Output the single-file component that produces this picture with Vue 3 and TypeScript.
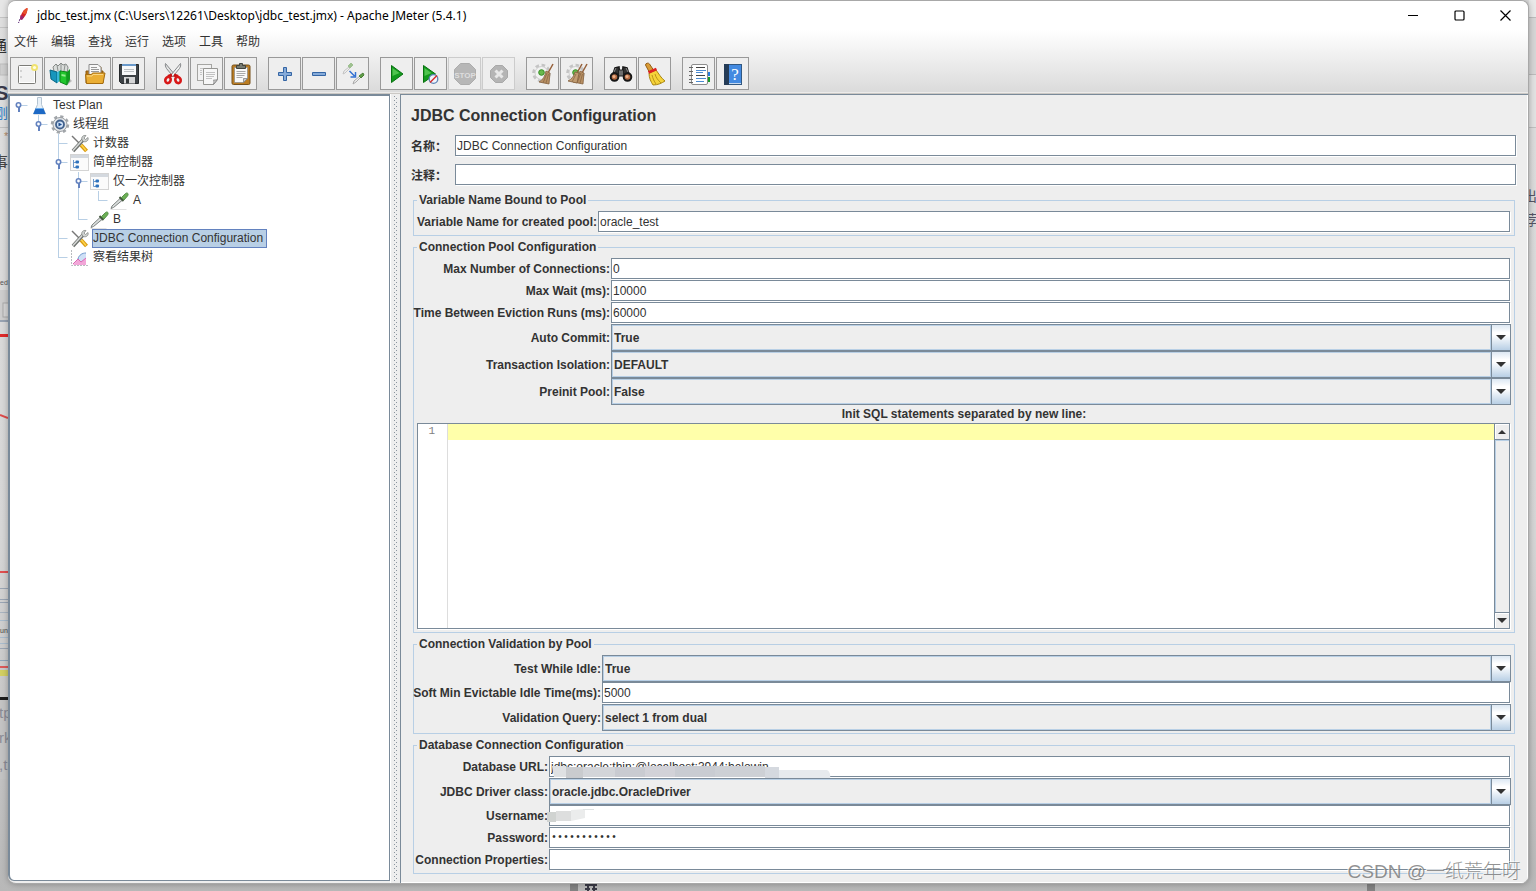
<script setup lang="ts">
import { ref } from 'vue'

type Guide = 'blank' | 'line' | 'tee' | 'elbow' | 'root' | 'handle-last' | 'handle-mid'

interface TreeRow {
  guides: Guide[]
  icon: string
  label: string
  selected?: boolean
}

interface Field {
  id: string
  label: string
  kind: 'text' | 'combo' | 'password'
  value: string
  mask?: 'url' | 'user'
}

interface Tool {
  icon: string
  title: string
  disabled?: boolean
}

const menus = ['文件', '编辑', '查找', '运行', '选项', '工具', '帮助']

const toolGroups: Tool[][] = [
  [
    { icon: 'new', title: '新建' },
    { icon: 'templates', title: '模板' },
    { icon: 'open', title: '打开' },
    { icon: 'save', title: '保存' },
  ],
  [
    { icon: 'cut', title: '剪切' },
    { icon: 'copy', title: '复制' },
    { icon: 'paste', title: '粘贴' },
  ],
  [
    { icon: 'plus', title: '展开全部' },
    { icon: 'minus', title: '收起全部' },
    { icon: 'toggle', title: '切换' },
  ],
  [
    { icon: 'start', title: '启动' },
    { icon: 'start-nt', title: '无间隔启动' },
    { icon: 'stop', title: '停止', disabled: true },
    { icon: 'shutdown', title: '关闭', disabled: true },
  ],
  [
    { icon: 'clear', title: '清除' },
    { icon: 'clear-all', title: '清除全部' },
  ],
  [
    { icon: 'search', title: '查找' },
    { icon: 'reset', title: '重置搜索' },
  ],
  [
    { icon: 'functions', title: '函数助手' },
    { icon: 'help', title: '帮助' },
  ],
]

const rows: TreeRow[] = [
  { guides: ['root'], icon: 'flask', label: 'Test Plan' },
  { guides: ['blank', 'handle-last'], icon: 'gear', label: '线程组' },
  { guides: ['blank', 'blank', 'tee'], icon: 'wrench', label: '计数器' },
  { guides: ['blank', 'blank', 'handle-mid'], icon: 'controller', label: '简单控制器' },
  { guides: ['blank', 'blank', 'line', 'handle-mid'], icon: 'controller', label: '仅一次控制器' },
  { guides: ['blank', 'blank', 'line', 'line', 'elbow'], icon: 'pipette', label: 'A' },
  { guides: ['blank', 'blank', 'line', 'elbow'], icon: 'pipette', label: 'B' },
  { guides: ['blank', 'blank', 'tee'], icon: 'wrench', label: 'JDBC Connection Configuration', selected: true },
  { guides: ['blank', 'blank', 'elbow'], icon: 'chart', label: '察看结果树' },
]

const name = ref('JDBC Connection Configuration')
const comment = ref('')
const sql = ref('')

const poolName = ref<Field[]>([
  { id: 'pool-name', label: 'Variable Name for created pool:', kind: 'text', value: 'oracle_test' },
])
const pool = ref<Field[]>([
  { id: 'max-conn', label: 'Max Number of Connections:', kind: 'text', value: '0' },
  { id: 'max-wait', label: 'Max Wait (ms):', kind: 'text', value: '10000' },
  { id: 'eviction', label: 'Time Between Eviction Runs (ms):', kind: 'text', value: '60000' },
  { id: 'commit', label: 'Auto Commit:', kind: 'combo', value: 'True' },
  { id: 'isolation', label: 'Transaction Isolation:', kind: 'combo', value: 'DEFAULT' },
  { id: 'preinit', label: 'Preinit Pool:', kind: 'combo', value: 'False' },
])
const validation = ref<Field[]>([
  { id: 'idle', label: 'Test While Idle:', kind: 'combo', value: 'True' },
  { id: 'soft-min', label: 'Soft Min Evictable Idle Time(ms):', kind: 'text', value: '5000' },
  { id: 'query', label: 'Validation Query:', kind: 'combo', value: 'select 1 from dual' },
])
const database = ref<Field[]>([
  { id: 'url', label: 'Database URL:', kind: 'text', value: 'jdbc:oracle:thin:@localhost:3944:helowin', mask: 'url' },
  { id: 'driver', label: 'JDBC Driver class:', kind: 'combo', value: 'oracle.jdbc.OracleDriver' },
  { id: 'user', label: 'Username:', kind: 'text', value: '', mask: 'user' },
  { id: 'password', label: 'Password:', kind: 'password', value: 'secret12345' },
  { id: 'props', label: 'Connection Properties:', kind: 'text', value: '' },
])

const groups = [
  { key: 'name', title: 'Variable Name Bound to Pool', fields: poolName, editor: false },
  { key: 'pool', title: 'Connection Pool Configuration', fields: pool, editor: true },
  { key: 'validation', title: 'Connection Validation by Pool', fields: validation, editor: false },
  { key: 'database', title: 'Database Connection Configuration', fields: database, editor: false },
]
</script>

<template>
  <div class="desktop">
    <svg class="strip strip-left" width="8" height="891" viewBox="0 0 8 891" aria-hidden="true">
      <rect width="8" height="17" fill="#e6e6e6" />
      <rect y="17" width="8" height="1" fill="#c4c4c4" />
      <rect y="18" width="8" height="9" fill="#dedede" />
      <rect y="27" width="8" height="1" fill="#c4c4c4" />
      <rect y="64" width="8" height="11" fill="#cfcfcf" stroke="#bdbdbd" />
      <text x="-9" y="52" font-size="16" fill="#333">通</text>
      <text x="-5" y="100" font-size="20" font-weight="bold" fill="#3a3a4a">S</text>
      <text x="-6" y="118" font-size="14" fill="#2f7fc9">刚</text>
      <rect y="127" width="8" height="1" fill="#bfbfbf" />
      <text x="4" y="140" font-size="11" fill="#b08a6a">*</text>
      <text x="-8" y="168" font-size="16" fill="#444">事</text>
      <text x="0" y="285" font-size="7" fill="#555">ed</text>
      <rect y="290" width="8" height="30" fill="#cdcdcd" />
      <rect x="3" y="303" width="8" height="14" fill="#d6d6d6" stroke="#aaa" />
      <rect y="320" width="8" height="2" fill="#98a3b2" />
      <rect y="334" width="8" height="3" fill="#e02a2a" />
      <path d="M0 415l8 3" stroke="#dd4a4a" stroke-width="2" />
      <rect y="571" width="8" height="2" fill="#e05050" />
      <rect y="588" width="8" height="1" fill="#9aa5b4" />
      <rect y="599" width="8" height="1" fill="#9aa5b4" />
      <rect y="602" width="8" height="1" fill="#9aa5b4" />
      <rect y="612" width="8" height="1" fill="#a9b4c0" />
      <rect y="620" width="8" height="1" fill="#a9bccd" />
      <text x="0" y="633" font-size="7" fill="#444">un</text>
      <rect y="637" width="8" height="1" fill="#a9bccd" />
      <rect y="643" width="8" height="1" fill="#a9bccd" />
      <rect y="648" width="8" height="1" fill="#9aa5b4" />
      <rect y="660" width="8" height="1" fill="#8fa6bb" />
      <rect y="666" width="8" height="2" fill="#dc5a5a" />
      <rect y="670" width="8" height="6" fill="#d2cf63" />
      <rect y="697" width="8" height="3" fill="#1c1c1c" />
      <rect y="700" width="8" height="79" fill="#c3c3c3" />
      <text x="-1" y="718" font-size="15" fill="#8b8b95">tp</text>
      <text x="-1" y="743" font-size="15" fill="#8b8b95">rk</text>
      <text x="-1" y="770" font-size="15" fill="#8b8b95">,t</text>
    </svg>
    <svg class="strip strip-right" width="7" height="891" viewBox="0 0 7 891" aria-hidden="true">
      <rect width="7" height="17" fill="#e9e9e9" />
      <rect y="17" width="7" height="57" fill="#d6d6d6" />
      <rect y="17" width="7" height="1" fill="#bcbcbc" />
      <rect y="74" width="7" height="1" fill="#bcbcbc" />
      <rect y="75" width="7" height="52" fill="#e2e2e2" />
      <rect y="127" width="7" height="1" fill="#c0c0c0" />
      <text x="-6" y="201" font-size="14" fill="#555566">出</text>
      <text x="-6" y="225" font-size="14" fill="#555566">荐</text>
    </svg>
    <svg class="strip strip-bottom" width="1536" height="7" viewBox="0 0 1536 7" aria-hidden="true">
      <rect x="570" width="8" height="7" fill="#828282" />
      <path d="M585 1h12M588 2v5M594 2v5M585 5h5M592 5h5" stroke="#3a3a46" stroke-width="2" />
      <rect x="1367" width="8" height="7" fill="#828282" />
    </svg>

    <div class="window">
      <header class="titlebar">
        <svg class="feather" width="12" height="18" viewBox="0 0 12 18" aria-hidden="true">
          <path d="M10.5 1C7 2 4 6 3 12l2 .5C8 10 10.500 6 10.500 1z" fill="#d22128" />
          <path d="M10.500 1C9 1 7 3 5.500 6l3 1.500C10 5 10.800 3 10.500 1z" fill="#e8532a" />
          <path d="M3.500 8l3.500 2-2 3-2-.8z" fill="#9b2672" />
          <path d="M3 12L1.500 16" stroke="#5d2a78" stroke-width="1" stroke-dasharray="2 1" />
        </svg>
        <h1 class="title">jdbc_test.jmx (C:\Users\12261\Desktop\jdbc_test.jmx) - Apache JMeter (5.4.1)</h1>
        <button class="winctl" type="button" aria-label="Minimize">
          <svg width="11" height="11" viewBox="0 0 11 11"><path d="M0 5.500h10" stroke="#000" /></svg>
        </button>
        <button class="winctl" type="button" aria-label="Maximize">
          <svg width="11" height="11" viewBox="0 0 11 11"><rect x="1" y="1" width="9" height="9" rx="1" fill="none" stroke="#000" stroke-width="1.200" /></svg>
        </button>
        <button class="winctl" type="button" aria-label="Close">
          <svg width="11" height="11" viewBox="0 0 11 11"><path d="M.5.5l10 10M10.500.5l-10 10" stroke="#000" stroke-width="1.200" /></svg>
        </button>
      </header>

      <div class="bars">
        <nav class="menubar">
          <button v-for="m in menus" :key="m" class="menu" type="button">{{ m }}</button>
        </nav>
        <div class="toolbar" role="toolbar">
          <div v-for="(g, gi) in toolGroups" :key="gi" class="toolgroup">
            <button v-for="t in g" :key="t.icon" class="tool" type="button" :aria-label="t.title" :disabled="t.disabled">
              <svg width="24" height="24" viewBox="0 0 24 24" aria-hidden="true">
                <g v-if="t.icon === 'new'">
                  <rect x="3.500" y="3.500" width="17" height="18" rx="1" fill="#f1f1f1" stroke="#7c7c78" />
                  <rect x="4.500" y="4.500" width="15" height="16" fill="none" stroke="#fff" />
                  <circle cx="6" cy="9" r=".8" fill="#aaa" /><circle cx="6" cy="15" r=".8" fill="#aaa" />
                  <circle cx="19.500" cy="5.500" r="3.500" fill="#f0e270" /><circle cx="19.500" cy="5.500" r="1.600" fill="#fffce0" />
                </g>
                <g v-else-if="t.icon === 'templates'">
                  <path d="M4 5l3-3 2 2 3-3 2 2 3-1 2 3-1 8H6z" fill="#d9dcda" stroke="#858a87" />
                  <path d="M8 3l1 6M12 2v7M16 3l-1 6" stroke="#8c918e" />
                  <path d="M1 8l7 2v11l-6-4z" fill="#1796bd" stroke="#086584" />
                  <path d="M8 10l4-2v10l-4 3z" fill="#37b6d8" />
                  <path d="M11 9l7 1v13l-7-3z" fill="#20c62d" stroke="#0b8417" />
                  <path d="M18 10l3-3v12l-3 4z" fill="#109b20" /><path d="M12.500 12l4 .7v2l-4-.8z" fill="#93ed8e" />
                  <path d="M18 23l5-4-2-2z" fill="#999" opacity=".6" />
                </g>
                <g v-else-if="t.icon === 'open'">
                  <path d="M3 9h4V5h11v4h2v12H3z" fill="#b87512" stroke="#8c5a0f" />
                  <path d="M6 2.500h9l3 3V13H6z" fill="#f8f8f8" stroke="#8b8b8b" /><path d="M8 5.500h6M8 7.500h8M8 9.500h8" stroke="#999" />
                  <path d="M2.500 12.500h6l1-1.500h12.500l-2 10.500H3.500z" fill="#eaae35" stroke="#a56c10" />
                  <path d="M4 14h5l1-1.500h10" fill="none" stroke="#f9d685" />
                </g>
                <g v-else-if="t.icon === 'save'">
                  <path d="M2.500 2.500h19v19H4.500l-2-2z" fill="#3c4145" stroke="#25292c" />
                  <rect x="5" y="2" width="14" height="11" fill="#f7f8f9" /><rect x="5" y="2" width="14" height="2" fill="#6a9acb" />
                  <path d="M7 7.500h10M7 9.500h10" stroke="#bcc0c3" />
                  <rect x="7" y="15" width="11" height="6.500" fill="#d5d6d7" /><rect x="9" y="16.500" width="3" height="5" fill="#33383b" />
                </g>
                <g v-else-if="t.icon === 'cut'">
                  <path d="M4.500 1.500c-.5 2 0 3 1 5l7 8.500 1.500-2z" fill="#e3e4e4" stroke="#85888a" />
                  <path d="M19.500 1.500c.5 2 0 3-1 5l-7 8.500-1.500-2z" fill="#f1f1f1" stroke="#85888a" />
                  <path d="M11 13l-4 1.500M13 13l4 1.500" stroke="#c71414" stroke-width="3" />
                  <ellipse cx="7" cy="18" rx="2.600" ry="3.200" fill="none" stroke="#d81818" stroke-width="2.600" transform="rotate(25 7 18)" />
                  <ellipse cx="17" cy="18" rx="2.600" ry="3.200" fill="none" stroke="#d81818" stroke-width="2.600" transform="rotate(-25 17 18)" />
                </g>
                <g v-else-if="t.icon === 'copy'">
                  <rect x="2.500" y="2.500" width="14" height="16" fill="#f2f2f2" stroke="#a5a5a2" />
                  <path d="M5 6.500h4M5 8.500h2M5 10.500h2M5 12.500h2" stroke="#c5c5c5" />
                  <path d="M8.500 6.500h14v11l-4 5h-10z" fill="#f7f7f7" stroke="#969693" />
                  <path d="M11 10.500h9M11 12.500h9M11 14.500h8M11 16.500h6" stroke="#c2c2c2" />
                  <path d="M22.500 17.500c-2 1-4 .5-4 .5s1 2 0 4.500z" fill="#ddd" stroke="#8c8c8c" />
                </g>
                <g v-else-if="t.icon === 'paste'">
                  <rect x="3" y="3" width="18" height="19.500" rx="1.500" fill="#bb7d23" stroke="#76501a" />
                  <path d="M5.500 5.500h13v11l-4 4h-9z" fill="#fafafa" stroke="#8d8d88" stroke-width=".7" />
                  <path d="M7.500 9.500h9M7.500 11.500h9M7.500 13.500h8M7.500 15.500h6" stroke="#aaa" />
                  <path d="M18.500 16.500l-4 4v-4z" fill="#ccc" stroke="#777" stroke-width=".7" />
                  <path d="M7.500 6.500v-3h3v-2h3v2h3v3z" fill="#777b72" stroke="#40443f" />
                </g>
                <path v-else-if="t.icon === 'plus'" d="M10.500 5.500h3v5h5v3h-5v5h-3v-5h-5v-3h5z" fill="#86abd9" stroke="#3465a4" stroke-linejoin="round" />
                <path v-else-if="t.icon === 'minus'" d="M5.500 10.500h13v3h-13z" fill="#86abd9" stroke="#3465a4" stroke-linejoin="round" />
                <g v-else-if="t.icon === 'toggle'">
                  <g opacity=".55"><path d="M2 12l1-3 5-4 1 1-5 5z" fill="#eee" stroke="#a3a3a3" /><path d="M7 4l3-3 2 2-3 3z" fill="#5f9d46" stroke="#5f9d46" /></g>
                  <path d="M8.500 9l5 5M14.500 10v5h-5" fill="none" stroke="#3471d2" stroke-width="1.500" />
                  <path d="M12 22l1-3 6-5 1 1-5 5z" fill="#f0f0f0" stroke="#aaa" /><path d="M18 14l4-3 1 2-3 3z" fill="#5f9d46" stroke="#4b8038" />
                </g>
                <g v-else-if="t.icon === 'start'"><path d="M6.500 3.500l11.500 8.500-11.500 8.500z" fill="#12991d" stroke="#087210" /><path d="M7.500 6l7 5-7 3z" fill="#4fc34e" /></g>
                <g v-else-if="t.icon === 'start-nt'">
                  <path d="M4.500 3.500l12 8.500-12 8.500z" fill="#12991d" stroke="#087210" /><path d="M5.500 6l7 5-7 3z" fill="#4fc34e" />
                  <circle cx="14.500" cy="17" r="4.300" fill="#eff4fc" stroke="#5e83b5" stroke-width="1.300" /><path d="M11 20.500l7-7" stroke="#d62b2b" stroke-width="1.500" />
                </g>
                <g v-else-if="t.icon === 'stop'">
                  <path d="M7.500 1.500h9l6 6v9l-6 6h-9l-6-6v-9z" fill="#b7b7b7" stroke="#acacac" />
                  <text x="12" y="15.500" text-anchor="middle" class="stop-word">STOP</text>
                </g>
                <g v-else-if="t.icon === 'shutdown'">
                  <path d="M8.500 3.500h7l5 5v7l-5 5h-7l-5-5v-7z" fill="#b5b5b5" stroke="#a9a9a9" />
                  <path d="M8.500 8.500l7 7M15.500 8.500l-7 7" stroke="#e8e8e8" stroke-width="3" />
                </g>
                <g v-else-if="t.icon === 'clear' || t.icon === 'clear-all'">
                  <circle cx="10.500" cy="11" r="7.800" fill="#f2f2f2" stroke="#c4c4c4" stroke-width="3" stroke-dasharray="3.500 2.600" />
                  <circle cx="10.500" cy="11" r="6.500" fill="#f2f2f2" stroke="#cfcfcf" /><circle cx="10.500" cy="10.500" r="2.800" fill="#69b94d" stroke="#348e24" />
                  <path d="M22 2l-5 9" stroke="#955f38" stroke-width="1.500" />
                  <path d="M15 9l4 2-1 11-10-2c4-2 6-6 7-11z" fill="#b89064" stroke="#83603e" stroke-width=".8" /><path d="M16 11l-4 10M17.500 12L15 21" stroke="#8a6845" stroke-width=".8" />
                  <g v-if="t.icon === 'clear-all'"><path d="M17 2l-5 9" stroke="#955f38" stroke-width="1.500" /><path d="M10 10l4 1-2 10-9-2c4-2 6-5 7-9z" fill="#c09c72" stroke="#83603e" stroke-width=".8" /><path d="M11 12l-4 8" stroke="#8a6845" stroke-width=".8" /></g>
                </g>
                <g v-else-if="t.icon === 'search'">
                  <path d="M3 15l3-9 4-1 1 9M21 15l-3-9-4-1-1 9" fill="#333" stroke="#191919" stroke-width="1.500" />
                  <rect x="9.500" y="8" width="5" height="6" fill="#6e6e6e" stroke="#222" />
                  <path d="M5 10l2-4M19 10l-2-4" stroke="#8d8d8d" />
                  <circle cx="5.500" cy="15" r="3.800" fill="#b26a42" stroke="#171717" stroke-width="2" /><circle cx="18.500" cy="15" r="3.800" fill="#b26a42" stroke="#171717" stroke-width="2" />
                  <circle cx="5" cy="14.500" r="1.500" fill="#ebb089" /><circle cx="18" cy="14.500" r="1.500" fill="#ebb089" />
                </g>
                <g v-else-if="t.icon === 'reset'">
                  <path d="M2.500 3c0-2 3-2.500 4-1l4 6-4 2.500z" fill="#d99b35" stroke="#955d14" />
                  <path d="M6 11l7-3c3 4 5 8 9 11-3 2-7 4-12 4-2-3-4-7-4-12z" fill="#f5d33a" stroke="#a88512" />
                  <path d="M9 13c1 4 2 6 4 9M12 12c1 4 3 6 6 9" fill="none" stroke="#bb9419" /><path d="M5.500 10.500l8-3.500" stroke="#d22" stroke-width="3" />
                </g>
                <g v-else-if="t.icon === 'functions'">
                  <rect x="20" y="10" width="3" height="4" fill="#267ce0" /><rect x="20" y="15" width="3" height="5" fill="#149a28" />
                  <rect x="4.500" y="2.500" width="16" height="20" rx="1.500" fill="#fff" stroke="#8d8d8d" />
                  <path d="M9 5.500h9M9 13.500h9" stroke="#444" /><path d="M9 8.500h10M9 10.500h7M9 16.500h10M9 19.500h8" stroke="#4b8bd2" />
                  <path d="M2 5.500h4M2 9.500h4M2 13.500h4M2 17.500h4M2 20.500h4" stroke="#666" />
                </g>
                <g v-else>
                  <rect x="3.500" y="2.500" width="17" height="20" fill="#438ae1" stroke="#315882" /><rect x="3" y="2" width="5" height="21" fill="#253c57" />
                  <path d="M8 21.500h12" stroke="#c7d8ec" /><text x="14" y="17.500" text-anchor="middle" class="help-mark">?</text>
                </g>
              </svg>
            </button>
          </div>
        </div>
      </div>

      <div class="body">
        <ul class="tree" role="tree">
          <li v-for="row in rows" :key="row.label" class="row" role="treeitem" :aria-selected="!!row.selected">
            <svg v-for="(g, i) in row.guides" :key="i" class="guide" width="20" height="19" viewBox="0 0 20 19" aria-hidden="true">
              <path v-if="g === 'line' || g === 'tee' || (g === 'handle-mid' && i === 2)" d="M8.500 0v19" class="guide-line" />
              <path v-if="g === 'elbow' || g === 'handle-last'" d="M8.500 0v10" class="guide-line" />
              <path v-if="g === 'handle-mid' && i === 3" d="M8.500 0v19" class="guide-line" />
              <path v-if="g !== 'blank' && g !== 'line'" d="M8.500 9.500h9" class="guide-line" />
              <g v-if="g === 'root' || g.startsWith('handle')">
                <rect x="8" y="10" width="2" height="6" fill="#6382bf" />
                <circle cx="8.500" cy="9" r="2.200" fill="#fff" stroke="#6382bf" stroke-width="1.600" />
              </g>
            </svg>
            <svg class="node-icon" width="20" height="19" viewBox="0 0 20 19" aria-hidden="true">
              <g v-if="row.icon === 'flask'">
                <path d="M7.500 1.500h4v7l4 9.500h-12l4-9.500z" fill="#e9f1f8" stroke="#b4c4d2" />
                <path d="M5.800 12h7.400l2.500 6H3.200z" fill="#1d69c5" /><path d="M6 12.500h7" stroke="#6eb0ef" />
              </g>
              <g v-else-if="row.icon === 'gear'">
                <circle cx="10" cy="9.500" r="8" fill="none" stroke="#a2a6aa" stroke-width="2.500" stroke-dasharray="3.200 3.080" />
                <circle cx="10" cy="9.500" r="7" fill="#e3e5e7" stroke="#9a9ea3" /><circle cx="10" cy="9.500" r="4" fill="#cfe0f5" stroke="#42618c" stroke-width="1.800" />
                <path d="M8.500 7.500l3.500 2-3.500 2z" fill="#1f4e8e" />
              </g>
              <g v-else-if="row.icon === 'wrench'">
                <path d="M2 2l8 8" stroke="#777" stroke-width="1.500" /><path d="M11 11l5.500 6" stroke="#d89a12" stroke-width="4" /><path d="M11 10.500l5 6" stroke="#ffd54a" stroke-width="1.500" />
                <path d="M3 17l10-11" stroke="#6d716e" stroke-width="3.500" /><path d="M3 16.500L13 5.500" stroke="#d7d9d8" stroke-width="1.500" />
                <path d="M12 6c-1-3 1-5 4-4.500l-2 2.500 1.500 1.500 2.500-2c1 3-2 5-4.500 4z" fill="#cfd2d1" stroke="#858987" stroke-width=".8" />
              </g>
              <g v-else-if="row.icon === 'controller'">
                <rect x=".5" y="1.500" width="18" height="16" fill="#fbfbfb" stroke="#d4d4d4" /><rect x="1" y="2" width="17" height="3" fill="#d4d9df" />
                <path d="M3.500 7v7.500h3M3.500 9.500h3" fill="none" stroke="#6f99c9" /><rect x="5.500" y="7.500" width="3.500" height="3" rx="1" fill="#2e73be" /><rect x="5.500" y="12.500" width="3.500" height="3" rx="1" fill="#2e73be" />
              </g>
              <g v-else-if="row.icon === 'pipette'">
                <path d="M.5 18.500h16" stroke="#e1e1e1" />
                <path d="M1 17.500l1-2.500 8-7.500 2 2-8.500 7z" fill="#d9dddc" stroke="#7d8381" />
                <path d="M9.500 6l4 4" stroke="#455a40" stroke-width="2" /><path d="M11.500 6.500l4-4c2-1.500 3.500.5 2 2.500l-3.500 4z" fill="#6caf55" stroke="#57924a" />
              </g>
              <g v-else>
                <path d="M1.500 2v15.500H18" fill="none" stroke="#b9bcc0" stroke-dasharray="2 1" />
                <path d="M7 12c1-5 5-6 9-7v9H7z" fill="#cfe0f6" /><path d="M8 11c1-4 4-6 8-6" fill="none" stroke="#6e98ce" />
                <path d="M3 17l5-6 3 3 5-4v7z" fill="#f2a6d8" /><path d="M3 16l5-5 3 3 5-4" fill="none" stroke="#d869b4" />
              </g>
            </svg>
            <span class="node-label" :class="{ selected: row.selected }">{{ row.label }}</span>
          </li>
        </ul>

        <div class="splitter" role="separator" aria-orientation="vertical"></div>

        <main class="panel">
          <h2 class="heading">JDBC Connection Configuration</h2>
          <div class="head-row">
            <label class="cjk-label" for="el-name">名称：</label>
            <input id="el-name" v-model="name" class="text" type="text" />
          </div>
          <div class="head-row">
            <label class="cjk-label" for="el-comment">注释：</label>
            <input id="el-comment" v-model="comment" class="text" type="text" />
          </div>

          <fieldset v-for="g in groups" :key="g.key" class="group" :class="'group-' + g.key">
            <legend class="legend">{{ g.title }}</legend>
            <div v-for="f in g.fields.value" :key="f.id" class="field" :class="'field-' + f.kind">
              <label class="label" :for="f.id">{{ f.label }}</label>
              <div class="control">
                <template v-if="f.kind === 'combo'">
                  <select :id="f.id" v-model="f.value" class="select">
                    <option>{{ f.value }}</option>
                  </select>
                  <span class="combo-arrow">
                    <svg width="10" height="5" viewBox="0 0 10 5" aria-hidden="true"><path d="M0 0h10L5 5z" fill="#333" /></svg>
                  </span>
                </template>
                <input v-else :id="f.id" v-model="f.value" class="text" :class="{ secret: f.kind === 'password' }" :type="f.kind" />
                <svg v-if="f.mask === 'url'" class="mask" width="284" height="28" viewBox="0 0 284 28" aria-hidden="true">
                  <path d="M3 10h14v11H5z" fill="#dfe1e3" /><path d="M17 11h17v11H17z" fill="#c9cbce" />
                  <path d="M34 11h32v10H34z" fill="#d3d5d9" /><path d="M66 11h30v10H66z" fill="#c9cbd1" />
                  <path d="M96 10h30v11H96z" fill="#d2d2d8" /><path d="M126 10h40v11h-40z" fill="#c9ccd2" />
                  <path d="M166 10h50v11h-50z" fill="#cdd0d5" /><path d="M216 11h14v11h-14z" fill="#d5d9df" />
                  <path d="M230 14h48q4 2 3 9h-40l-11-1z" fill="#e6eaee" />
                </svg>
                <svg v-if="f.mask === 'user'" class="mask mask-user" width="60" height="22" viewBox="0 0 60 22" aria-hidden="true">
                  <path d="M0 7h9v10H0z" fill="#d0d3d1" /><path d="M9 6h15v10H9z" fill="#dddede" />
                  <path d="M24 5l14-1v9l-14 3z" fill="#ebecec" /><path d="M36 4h11v1H36z" fill="#dfe3e4" />
                </svg>
              </div>
            </div>
            <template v-if="g.editor">
              <label class="editor-label" for="sql">Init SQL statements separated by new line:</label>
              <div class="editor">
                <div class="gutter">1</div>
                <textarea id="sql" v-model="sql" class="code" spellcheck="false"></textarea>
                <div class="scrollbar">
                  <button class="scroll-btn" type="button" aria-label="Scroll up">
                    <svg width="8" height="4" viewBox="0 0 8 4"><path d="M0 4h8L4 0z" fill="#333" /></svg>
                  </button>
                  <div class="track"></div>
                  <button class="scroll-btn" type="button" aria-label="Scroll down">
                    <svg width="10" height="5" viewBox="0 0 10 5"><path d="M0 0h10L5 5z" fill="#333" /></svg>
                  </button>
                </div>
              </div>
            </template>
          </fieldset>
        </main>
      </div>
    </div>
    <div class="watermark">CSDN @一纸荒年呀</div>
  </div>
</template>

<style>
body {
  margin: 0;
}
</style>

<style scoped>
.desktop {
  position: relative;
  box-sizing: border-box;
  min-height: 100vh;
  padding: 0 7px 7px 8px;
  display: flex;
  overflow: hidden;
  background: linear-gradient(#dedede, #d6d6d6 60%, #b8b8b8);
  color: #333;
  font: 12px/16px "Liberation Sans", "Noto Sans CJK SC", sans-serif;
}
.strip {
  position: absolute;
  display: block;
}
.strip-left {
  left: 0;
  top: 0;
}
.strip-right {
  right: 0;
  top: 0;
}
.strip-bottom {
  left: 0;
  bottom: 0;
}
.window {
  position: relative;
  flex: 1;
  min-width: 0;
  display: flex;
  flex-direction: column;
  border: solid #a8a8a8;
  border-width: 1px 1px 1px 0;
  border-radius: 8px;
  overflow: hidden;
  background: #eee;
  box-shadow: 0 0 6px rgba(0, 0, 0, 0.3);
}
.titlebar {
  display: flex;
  align-items: center;
  height: 29px;
  padding-left: 9px;
  background: #fff;
}
.feather {
  flex: none;
}
.title {
  flex: 1;
  margin: 0 0 0 8px;
  color: #000;
  font: 12px/16px "Noto Sans", "Open Sans", sans-serif;
  white-space: nowrap;
}
.winctl {
  display: grid;
  place-items: center;
  width: 46px;
  height: 28px;
  padding: 0;
  border: 0;
  background: none;
}
.bars {
  background: linear-gradient(#fff, #dadada);
  border-bottom: 1px solid #cbc8c4;
  box-shadow: inset 0 -1px #ecebea;
}
.menubar {
  display: flex;
  gap: 13px;
  padding: 2px 7px 1px 6px;
}
.menu {
  padding: 0;
  border: 0;
  background: none;
  color: #333;
  font: 12px/18px "Noto Sans CJK SC", sans-serif;
}
.toolbar {
  display: flex;
  gap: 10px;
  padding: 6px 2px 3px;
}
.toolgroup {
  display: flex;
  gap: 1px;
  padding-right: 1px;
}
.tool {
  display: grid;
  place-items: center;
  width: 33px;
  height: 33px;
  padding: 0;
  border: 1px solid #999;
  background: #eee;
}
.tool:disabled {
  border-color: #ccc;
}
.stop-word {
  font: bold 8px "Liberation Sans", sans-serif;
  fill: #dedede;
}
.help-mark {
  font: 17px "Liberation Serif", serif;
  fill: #fff;
}
.body {
  flex: 1;
  display: flex;
  min-height: 0;
}
.tree {
  flex: none;
  box-sizing: border-box;
  width: 382px;
  margin: 0 0 2px;
  padding: 0;
  list-style: none;
  background: #fff;
  border: solid #7a8a99;
  border-width: 2px 1px 1px 2px;
  border-bottom-left-radius: 6px;
}
.row {
  display: flex;
  align-items: center;
  height: 19px;
}
.guide,
.node-icon {
  flex: none;
  display: block;
}
.guide-line {
  fill: none;
  stroke: #b8cfe5;
}
.node-label {
  margin-left: 2px;
  padding: 0 1px;
  line-height: 17px;
  border: 1px solid transparent;
  border-left-width: 0;
  white-space: nowrap;
}
.node-label.selected {
  padding: 0 3px 0 0;
  border: 1px solid #6382bf;
  background: #b8cfe5;
}
.splitter {
  flex: none;
  width: 10px;
  position: relative;
  background: linear-gradient(90deg, #fff 1px, #eee 1px);
}
.splitter::after {
  content: "";
  position: absolute;
  inset: 2px 2px 2px 4px;
  background-image:
    conic-gradient(from 270deg at 1px 1px, #8a949e 90deg, transparent 0),
    conic-gradient(from 270deg at 1px 1px, #8a949e 90deg, transparent 0);
  background-size: 4px 4px;
  background-position: 0 0, 2px 2px;
}
.panel {
  flex: 1;
  min-width: 0;
  box-sizing: border-box;
  display: flex;
  flex-direction: column;
  padding: 11px 12px 9px 10px;
  border: solid #7a8a99;
  border-width: 1px 0 0 1px;
  box-shadow: inset -1px -1px #fff;
}
.heading {
  margin: 0 0 9px;
  font-size: 16px;
  line-height: 20px;
}
.head-row {
  display: flex;
  align-items: center;
  height: 22px;
  margin-bottom: 7px;
}
.cjk-label {
  flex: none;
  width: 44px;
  font: bold 12px/20px "Noto Sans CJK SC", sans-serif;
}
.text {
  flex: 1;
  align-self: flex-start;
  min-width: 0;
  box-sizing: border-box;
  height: 21px;
  padding: 0 1px;
  border: 1px solid #7a8a99;
  border-radius: 0;
  outline: 0;
  background: #fff;
  box-shadow: 1px 1px #fff;
  color: #333;
  font: 12px/19px "Liberation Sans", "Noto Sans CJK SC", sans-serif;
}
.text.secret {
  padding-left: 1px;
  font: 10px/19px "Liberation Mono", monospace;
}
.group {
  min-width: 0;
  margin: 0 1px 4px 2px;
  padding: 3px 3px 2px;
  border: 1px solid #b8cfe5;
}
.group:last-child {
  margin-bottom: 0;
}
.legend {
  padding: 0 2px;
  line-height: 15px;
  font-weight: bold;
}
.field {
  display: flex;
  height: 22px;
}
.field-combo {
  height: 27px;
}
.label {
  flex: none;
  box-sizing: border-box;
  display: flex;
  align-items: center;
  justify-content: flex-end;
  padding-right: 1px;
  font-weight: bold;
  white-space: nowrap;
}
.group-name .label {
  width: 181px;
}
.group-pool .label {
  width: 194px;
}
.group-validation .label {
  width: 185px;
}
.group-database .label {
  width: 132px;
}
.control {
  position: relative;
  flex: 1;
  min-width: 0;
  display: flex;
}
.control .text {
  margin-right: 1px;
}
.select {
  flex: 1;
  min-width: 0;
  height: 27px;
  padding: 0 22px 0 2px;
  appearance: none;
  border: 1px solid #7a8a99;
  border-radius: 0;
  outline: 0;
  background: #eee;
  box-shadow: inset 1px 1px #b8cfe5, inset 0 -1px #b8cfe5;
  color: #333;
  font: bold 12px/16px "Liberation Sans", sans-serif;
}
.combo-arrow {
  position: absolute;
  top: 1px;
  right: 1px;
  bottom: 1px;
  width: 18px;
  display: grid;
  place-items: center;
  border-left: 1px solid #7a8a99;
  background: linear-gradient(#dde8f3, #fff 30%, #fff 40%, #b8cfe5);
  box-shadow: -1px 0 #b8cfe5;
  pointer-events: none;
}
.mask {
  position: absolute;
  left: 0;
  top: 0;
  pointer-events: none;
}
.mask-user {
  left: -2px;
}
.group-pool {
  flex: 1;
  display: flex;
  flex-direction: column;
}
.editor-label {
  text-align: center;
  line-height: 18px;
  font-weight: bold;
}
.editor {
  flex: 1;
  display: flex;
  min-height: 120px;
  margin: 0 1px 1px 0;
  border: 1px solid #7a8a99;
  box-shadow: 1px 1px #fff;
  background: #fff;
}
.gutter {
  flex: none;
  width: 17px;
  padding-right: 12px;
  border-right: 1px solid #ddd;
  color: #808080;
  font: 11px/14px "Liberation Mono", monospace;
  text-align: right;
}
.code {
  flex: 1;
  min-width: 0;
  padding: 0;
  border: 0;
  outline: 0;
  resize: none;
  background: linear-gradient(#ffffaa, #ffffaa) 0 0 / 100% 16px no-repeat #fff;
  font: 13px/16px "Liberation Mono", monospace;
}
.scrollbar {
  flex: none;
  display: flex;
  flex-direction: column;
  width: 14px;
  border-left: 1px solid #7a8a99;
  background: #eee;
}
.scroll-btn {
  display: grid;
  place-items: center;
  height: 15px;
  padding: 0;
  border: 0;
  background: #eee;
  box-shadow: inset 1px 1px #fff;
}
.track {
  flex: 1;
  border: solid #7a8a99;
  border-width: 1px 0;
  box-shadow: inset 1px 1px #b8cfe5;
}
.watermark {
  position: absolute;
  right: 15px;
  bottom: 6px;
  color: rgba(110, 110, 110, 0.75);
  font: 300 19px/26px "Liberation Sans", "Noto Sans CJK SC", sans-serif;
  text-shadow: -1px -1px rgba(255, 255, 255, 0.7);
  pointer-events: none;
}
</style>
